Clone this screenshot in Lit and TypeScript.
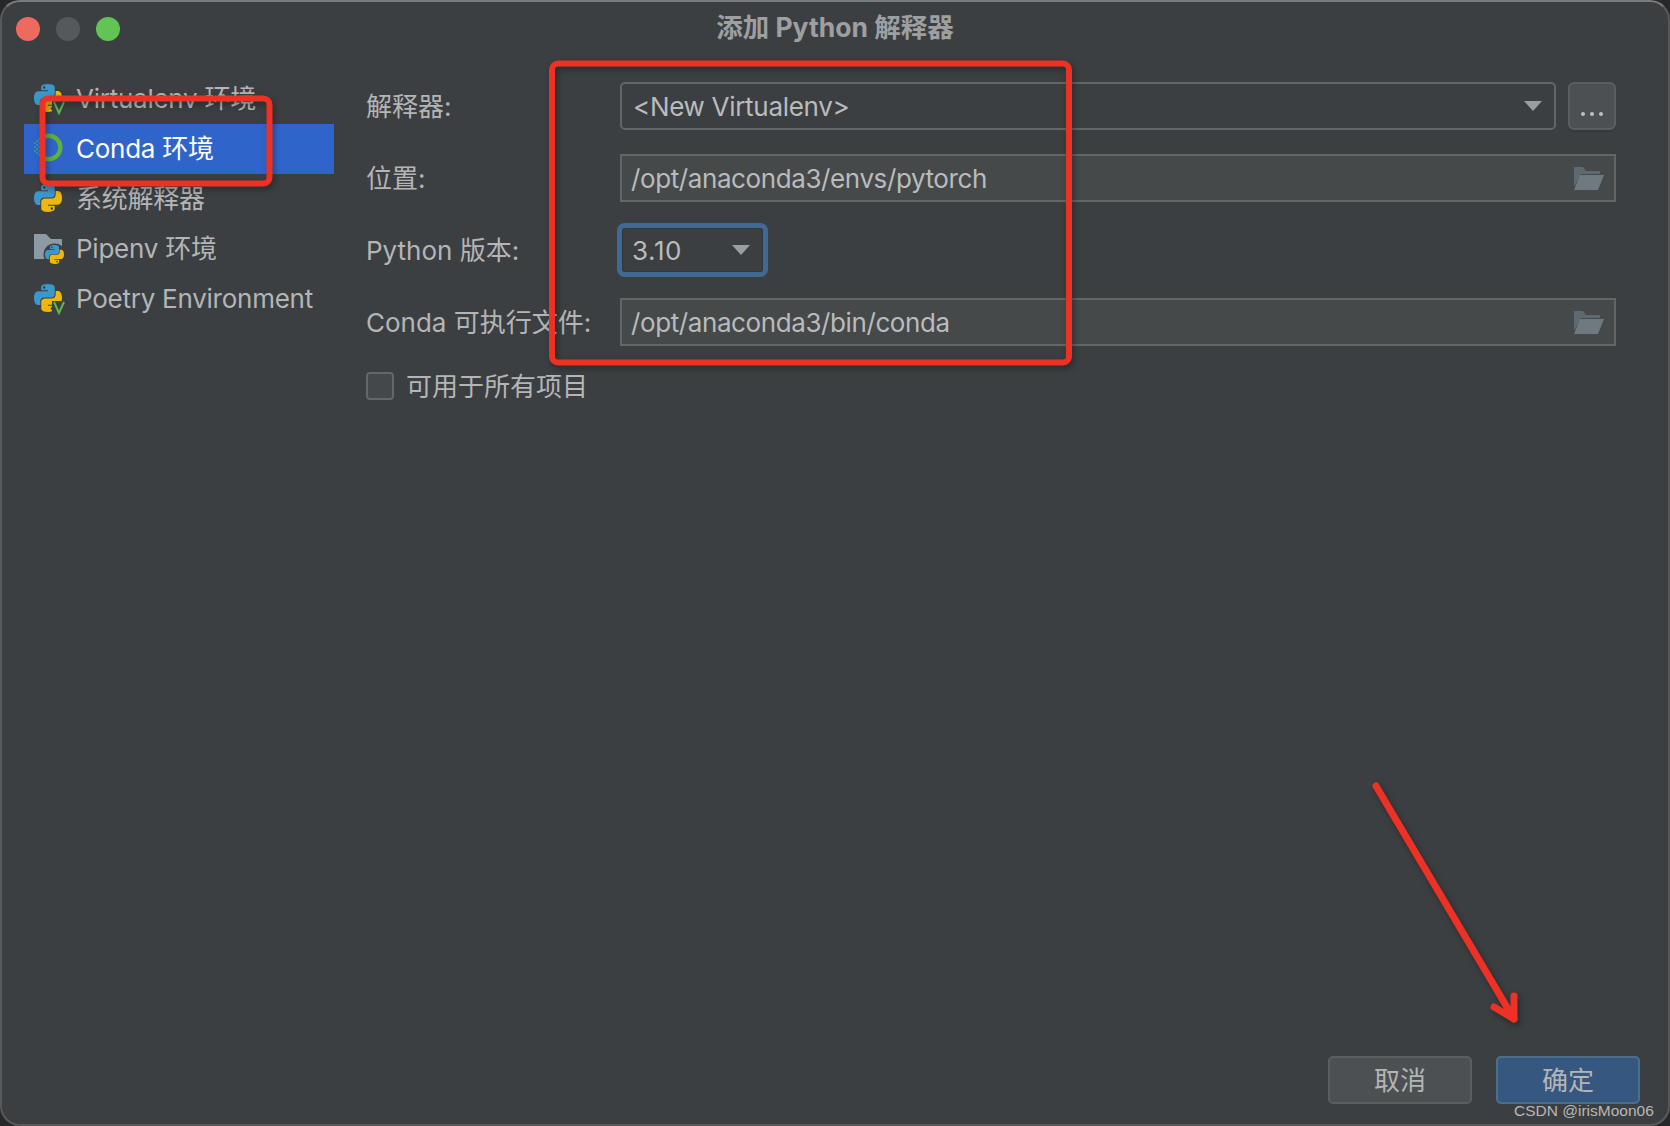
import { LitElement, html, css, svg } from "lit";
import { customElement } from "lit/decorators.js";

const BLUE = "M15.885 2.1c-7.1 0-6.651 3.07-6.651 3.07V8.36h6.752v1H6.545S2 8.8 2 16.005s4.013 6.912 4.013 6.912H8.33v-3.361s-.13-4.013 3.9-4.013h6.762s3.772.06 3.772-3.652V5.8s.572-3.712-6.842-3.712zm-3.732 2.137a1.214 1.214 0 1 1 0 2.428 1.214 1.214 0 0 1 0-2.428z";
const YELLOW = "M16.085 29.91c7.1 0 6.651-3.08 6.651-3.08v-3.19h-6.752v-1h9.441S30 23.2 30 16s-4.013-6.912-4.013-6.912H23.67V12.4s.13 4.013-3.9 4.013h-6.762s-3.772-.06-3.772 3.652v6.13s-.572 3.712 6.842 3.712zm3.732-2.137a1.214 1.214 0 1 1 0-2.428 1.214 1.214 0 0 1 0 2.428z";

const snake = (x: number, y: number, s: number) => svg`<g transform="translate(${x} ${y}) scale(${s / 28}) translate(-2 -2)">
  <path d=${BLUE} fill="#3d97c9"/><path d=${YELLOW} fill="#efb60c"/></g>`;

const veeMark = svg`<path d="M0 0l5 11 5-11" transform="translate(20 19)" fill="none" stroke="#5bb84a" stroke-width="2"/>`;

const iconPython = (v: boolean) => html`<svg class="icon" viewBox="0 0 32 32" width="32" height="32">
  ${snake(0, 1, 28)}${v ? html`${svg`<rect x="18" y="18" width="14" height="14" fill="#3c3f41"/>`}${veeMark}` : ""}</svg>`;

const condaDots: [number, number][] = [
  [1, 10], [1, 14], [1, 18], [3.2, 8], [3.2, 12], [3.2, 16], [3.2, 20], [5.4, 6], [5.4, 10], [5.4, 14], [5.4, 18], [5.4, 22],
];
const iconConda = html`<svg class="icon" viewBox="0 0 32 32" width="32" height="32">
  <path d="M10.5 3.7A11.6 11.6 0 1 1 10.5 25.3" fill="none" stroke="#5fb03f" stroke-width="4.4"/>
  <g fill="#3f9e86">${condaDots.map(([x, y]) => svg`<circle cx=${x} cy=${y} r="1"/>`)}</g></svg>`;

const iconPipenv = html`<svg class="icon" viewBox="0 0 32 32" width="32" height="32">
  <path d="M0 1h12l5 5h11v20H0z" fill="#8c9aa3"/>
  <circle cx="20.5" cy="21.5" r="11" fill="#3c3f41"/>
  ${snake(11, 12, 19)}</svg>`;

const folder = html`<svg class="folder" viewBox="0 0 30 23" width="30" height="23">
  <path d="M0 0h9l3 4h14v3H7L0 20z" fill="#5f6a70"/>
  <path d="M6 8h24l-6 15H0z" fill="#6f7a80"/></svg>`;

const caret = html`<svg class="caret" viewBox="0 0 18 10" width="18" height="10"><path d="M0 0h18L9 10z" fill="#9a9da1"/></svg>`;

@customElement("app-root")
export class AppRoot extends LitElement {
  static styles = css`
    :host { display: block; width: 1670px; height: 1126px; background: #26282a; overflow: hidden; }
    * { box-sizing: border-box; }
    .window {
      position: relative; width: 1670px; height: 1126px; background: #3c3f41;
      border: 2px solid #58595a; border-top-color: #7a7b7c; border-radius: 20px;
      display: flex; flex-direction: column; color: #b3b5b6;
      font-family: Inter, "Noto Sans CJK SC", sans-serif; font-size: 26px;
    }
    .titlebar { height: 54px; display: grid; grid-template-columns: 1fr auto 1fr; align-items: center; padding: 0 14px; flex: none; }
    .lights { display: flex; gap: 16px; }
    .light { width: 24px; height: 24px; border-radius: 50%; }
    .red { background: #ee6a5f; } .grey { background: #55595b; } .green { background: #61c454; }
    .title { font-weight: 700; font-size: 26.5px; color: #9d9fa1; padding-bottom: 7px; }
    .body { flex: 1; display: flex; min-height: 0; }
    .side { width: 310px; margin-left: 22px; padding-top: 18px; flex: none; }
    .row { height: 50px; display: flex; align-items: center; gap: 10px; padding-left: 10px; white-space: nowrap; letter-spacing: -0.25px; }
    .row span { padding-bottom: 5px; }
    .row span.latin { padding-bottom: 1px; }
    .row.sel { background: #2f65ca; color: #fff; }
    .icon { flex: none; }
    .main { flex: 1; padding: 26px 52px 0 32px; }
    .form { display: grid; grid-template-columns: 254px 1fr; grid-auto-rows: 48px; row-gap: 24px; align-items: center; }
    .label { padding-bottom: 4px; }
    .control { height: 48px; display: flex; align-items: center; color: #b9bbbc; }
    .combo { border: 2px solid #646566; border-radius: 5px; padding: 0 12px 0 11px; justify-content: space-between; background: #3c3f41; flex: 1; letter-spacing: -0.3px; }
    .combowrap { display: flex; gap: 12px; }
    .more { width: 48px; height: 48px; flex: none; background: #4c5052; border: 2px solid #5b5e60; border-radius: 6px; box-shadow: 0 2px 0 #37393b; display: flex; align-items: flex-end; justify-content: center; gap: 5px; padding-bottom: 12px; }
    .dot { width: 4px; height: 4px; border-radius: 50%; background: #bdbfc0; }
    .field { background: #45494a; border: 2px solid #646566; padding: 0 10px 0 9px; justify-content: space-between; letter-spacing: -0.4px; }
    .version { width: 141px; height: 44px; margin-left: 2px; border: 1px solid #33363a; border-radius: 3px; box-shadow: 0 0 0 5px #3f6a94; padding: 0 12px 0 9px; justify-content: space-between; letter-spacing: 0.6px; }
    .check { display: flex; align-items: center; gap: 12px; margin-top: 26px; height: 28px; }
    .check span:last-child { padding-bottom: 4px; }
    .box { width: 28px; height: 28px; border: 2px solid #656667; border-radius: 4px; background: #43484a; }
    .footer { flex: none; display: flex; justify-content: flex-end; gap: 24px; padding: 0 28px 20px 0; }
    .btn { width: 144px; height: 48px; border-radius: 5px; display: flex; align-items: center; justify-content: center; background: #4c5052; border: 2px solid #5b5e60; color: #b3b5b6; padding-bottom: 4px; }
    .btn.primary { background: #365880; border-color: #4c708c; }
    .mark { position: absolute; left: 1512px; top: 1100px; font-size: 15.5px; font-family: "Liberation Sans", sans-serif; color: #b6b7b8; white-space: nowrap; }
    .ink { position: absolute; left: -2px; top: -2px; pointer-events: none; filter: drop-shadow(2px 3px 3px rgba(0,0,0,.35)); }
  `;

  render() {
    return html`<div class="window">
      <div class="titlebar">
        <div class="lights"><span class="light red"></span><span class="light grey"></span><span class="light green"></span></div>
        <div class="title">添加 Python 解释器</div>
        <div></div>
      </div>
      <div class="body">
        <div class="side">
          <div class="row">${iconPython(true)}<span>Virtualenv 环境</span></div>
          <div class="row sel">${iconConda}<span>Conda 环境</span></div>
          <div class="row">${iconPython(false)}<span>系统解释器</span></div>
          <div class="row">${iconPipenv}<span>Pipenv 环境</span></div>
          <div class="row">${iconPython(true)}<span class="latin">Poetry Environment</span></div>
        </div>
        <div class="main">
          <div class="form">
            <div class="label">解释器:</div>
            <div class="combowrap">
              <div class="control combo"><span>&lt;New Virtualenv&gt;</span>${caret}</div>
              <div class="more"><span class="dot"></span><span class="dot"></span><span class="dot"></span></div>
            </div>
            <div class="label">位置:</div>
            <div class="control field"><span>/opt/anaconda3/envs/pytorch</span>${folder}</div>
            <div class="label">Python 版本:</div>
            <div class="control version"><span>3.10</span>${caret}</div>
            <div class="label">Conda 可执行文件:</div>
            <div class="control field"><span>/opt/anaconda3/bin/conda</span>${folder}</div>
          </div>
          <div class="check"><span class="box"></span><span>可用于所有项目</span></div>
        </div>
      </div>
      <div class="footer">
        <div class="btn">取消</div>
        <div class="btn primary">确定</div>
      </div>
      <div class="mark">CSDN @irisMoon06</div>
      <svg class="ink" width="1670" height="1126" viewBox="0 0 1670 1126" fill="none" stroke="#ee3124" stroke-linecap="round" stroke-linejoin="round">
        <rect x="42.5" y="98.5" width="227" height="85" rx="6" stroke-width="6"/>
        <rect x="552" y="63.5" width="517" height="299" rx="6" stroke-width="6"/>
        <path d="M1376 786L1514 1019" stroke-width="7"/>
        <path d="M1494 1007L1514 1019L1514 996" stroke-width="7"/>
      </svg>
    </div>`;
  }
}
